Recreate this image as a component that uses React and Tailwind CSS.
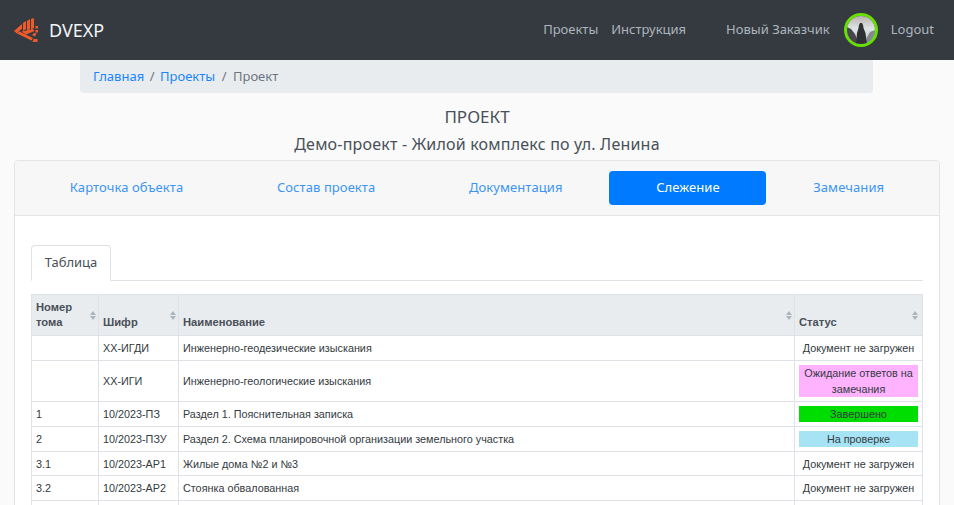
// DVEXP project page: tracking tab with the documents table

const ui = { fontFamily: '"Noto Sans", sans-serif' }

const rows = [
  { num: '', code: 'ХХ-ИГДИ', name: 'Инженерно-геодезические изыскания', status: 'none' },
  { num: '', code: 'ХХ-ИГИ', name: 'Инженерно-геологические изыскания', status: 'waiting' },
  { num: '1', code: '10/2023-ПЗ', name: 'Раздел 1. Пояснительная записка', status: 'done' },
  { num: '2', code: '10/2023-ПЗУ', name: 'Раздел 2. Схема планировочной организации земельного участка', status: 'review' },
  { num: '3.1', code: '10/2023-АР1', name: 'Жилые дома №2 и №3', status: 'none' },
  { num: '3.2', code: '10/2023-АР2', name: 'Стоянка обвалованная', status: 'none' },
  { num: '', code: '', name: '', status: '' },
]

function Status({ status }) {
  if (status === 'none') return <div className="text-center leading-[14px]">Документ не загружен</div>
  if (status === 'waiting') {
    return <div className="bg-[#ffb3ff] text-center leading-[16px]">Ожидание ответов на замечания</div>
  }
  if (status === 'done') return <div className="bg-[#00dd00] text-center leading-[16px]">Завершено</div>
  if (status === 'review') return <div className="bg-[#a6e3f5] text-center leading-[16px]">На проверке</div>
  return null
}

function SortArrows({ last }) {
  return (
    <svg className={last ? 'absolute right-[4px] top-[16px]' : 'absolute right-[2px] top-[16px]'} width="6" height="9" viewBox="0 0 6 9">
      <path d="M3 0 L6 4 L0 4 Z M3 9 L6 5 L0 5 Z" fill="#adb5bd" />
    </svg>
  )
}

function Logo() {
  return (
    <svg width="25" height="24" viewBox="0 0 25 24" fill="#ee5a2a">
      <path d="M0 13 L8 6 L8 10.5 L4 14.5 L3 15.5 Z" />
      <path d="M9 5 L12 3 L12 11 L9 13 Z" />
      <path d="M13 3 L16 1 L16 11 L13 12.5 Z" />
      <path d="M17 1 L20 0 L20 10 L17 11.5 Z" />
      <path d="M3 15.5 L5.5 13.5 L19 20 L17.5 22.5 Z" />
      <path d="M7.5 13.5 L19 11 L20.5 13 L12 16.5 Z" />
      <path d="M20 15 L22.5 15.5 L21 18.5 L18 17 Z" />
      <rect x="21.5" y="8" width="2.5" height="2.5" />
      <rect x="21.5" y="12" width="2.5" height="2.5" />
      <path d="M19.5 21 L23.5 21 L23.5 24 L18.5 24 Z" />
    </svg>
  )
}

function Avatar() {
  return (
    <div className="w-[34px] h-[34px] rounded-full border-[3px] border-[#66e000] overflow-hidden">
      <svg width="28" height="28" viewBox="0 0 28 28">
        <defs>
          <linearGradient id="sky" x1="0" y1="0" x2="0" y2="1">
            <stop offset="0" stopColor="#b9b3ae" />
            <stop offset="0.45" stopColor="#dfe3e5" />
            <stop offset="1" stopColor="#c3cbd0" />
          </linearGradient>
        </defs>
        <rect width="28" height="28" fill="url(#sky)" />
        <path d="M0 11 L4 13 L8 18 L10 23 L10 28 L0 28 Z" fill="#45474a" />
        <path d="M28 14 L23 16 L20 21 L18 28 L28 28 Z" fill="#83898c" />
        <path d="M9 28 L10 17 L11.5 12 L12 9 L13 7 L15 7 L16 9 L16.5 12 L18.5 17 L20 28 Z" fill="#2f3033" />
      </svg>
    </div>
  )
}

const tabs = ['Карточка объекта', 'Состав проекта', 'Документация', 'Слежение', 'Замечания']

export default function App() {
  return (
    <div className="h-[505px] overflow-hidden bg-[#fafafa] text-[#495057]" style={ui}>
      {/* Navbar */}
      <nav className="h-[60px] bg-[#343a40] flex items-center pl-[14px] pr-[20px]">
        <Logo />
        <span className="ml-[10px] text-[18px] text-[#f2f4f6]">DVEXP</span>
        <div className="ml-auto flex items-center text-[13px] text-[#adb5bd]">
          <span>Проекты</span>
          <span className="ml-[13px]">Инструкция</span>
          <span className="ml-[40px]">Новый Заказчик</span>
          <div className="ml-[14px]"><Avatar /></div>
          <span className="ml-[13px]">Logout</span>
        </div>
      </nav>

      {/* Breadcrumb */}
      <div className="mx-[80px] w-[793px] h-[33px] bg-[#e9ecef] rounded-b flex items-center px-[13px] text-[13px]">
        <span className="text-[#1a85ff]">Главная</span>
        <span className="mx-[5.5px] text-[#6c757d]">/</span>
        <span className="text-[#1a85ff]">Проекты</span>
        <span className="mx-[6.5px] text-[#6c757d]">/</span>
        <span className="text-[#6c757d]">Проект</span>
      </div>

      <h1 className="mt-[12px] text-center text-[17px] leading-[24px]">ПРОЕКТ</h1>
      <h2 className="mt-[3px] text-center text-[16px] leading-[24px] tracking-[0.2px]">Демо-проект - Жилой комплекс по ул. Ленина</h2>

      {/* Card */}
      <div className="mx-[14px] mt-[4px] w-[926px] border border-[#e3e4e5] rounded bg-white">
        <div className="h-[55px] bg-[#f7f7f7] border-b border-[#e3e4e5] rounded-t flex items-center px-[8px] text-[13px] tracking-[0.08px]">
          {tabs.map((tab) =>
            tab === 'Слежение' ? (
              <div key={tab} className="flex-auto h-[34px] flex items-center justify-center rounded bg-[#007bff] text-white">{tab}</div>
            ) : (
              <div key={tab} className="flex-auto h-[34px] flex items-center justify-center text-[#3b95f5]">{tab}</div>
            )
          )}
        </div>

        <div className="px-[16px] pt-[29px]">
          <div className="border-b border-[#dee2e6] flex">
            <div className="w-[80px] h-[36px] -mb-px bg-white border border-b-white border-[#dee2e6] rounded-t flex items-center justify-center text-[13px]">
              Таблица
            </div>
          </div>

          <table
            className="mt-[13px] w-[891px] table-fixed border-collapse text-[10.8px] leading-[14px] text-[#333a40]"
            style={{ fontFamily: '"Liberation Sans", Arial, sans-serif' }}
          >
            <colgroup>
              <col className="w-[67px]" />
              <col className="w-[80px]" />
              <col className="w-[616px]" />
              <col className="w-[128px]" />
            </colgroup>
            <thead>
              <tr className="h-[41px] bg-[#e9ecef] text-[#495057] text-left font-bold text-[11.2px]">
                <th className="relative border border-[#dee2e6] px-[4px] pb-[5px] align-bottom leading-[15px]">Номер тома<SortArrows /></th>
                <th className="relative border border-[#dee2e6] px-[4px] pb-[5px] align-bottom leading-[15px]">Шифр<SortArrows /></th>
                <th className="relative border border-[#dee2e6] px-[4px] pb-[5px] align-bottom leading-[15px]">Наименование<SortArrows /></th>
                <th className="relative border border-[#dee2e6] px-[4px] pb-[5px] align-bottom leading-[15px]">Статус<SortArrows last /></th>
              </tr>
            </thead>
            <tbody>
              {rows.map((row, i) => (
                <tr key={i} className={i === 4 ? 'h-[24px]' : 'h-[25px]'}>
                  <td className="border border-[#dee2e6] px-[4px] py-[3px]">{row.num}</td>
                  <td className="border border-[#dee2e6] px-[4px] py-[3px]">{row.code}</td>
                  <td className="border border-[#dee2e6] px-[4px] py-[3px]">{row.name}</td>
                  <td className="border border-[#dee2e6] px-[4px] py-[4px]"><Status status={row.status} /></td>
                </tr>
              ))}
            </tbody>
          </table>
        </div>
      </div>
    </div>
  )
}
